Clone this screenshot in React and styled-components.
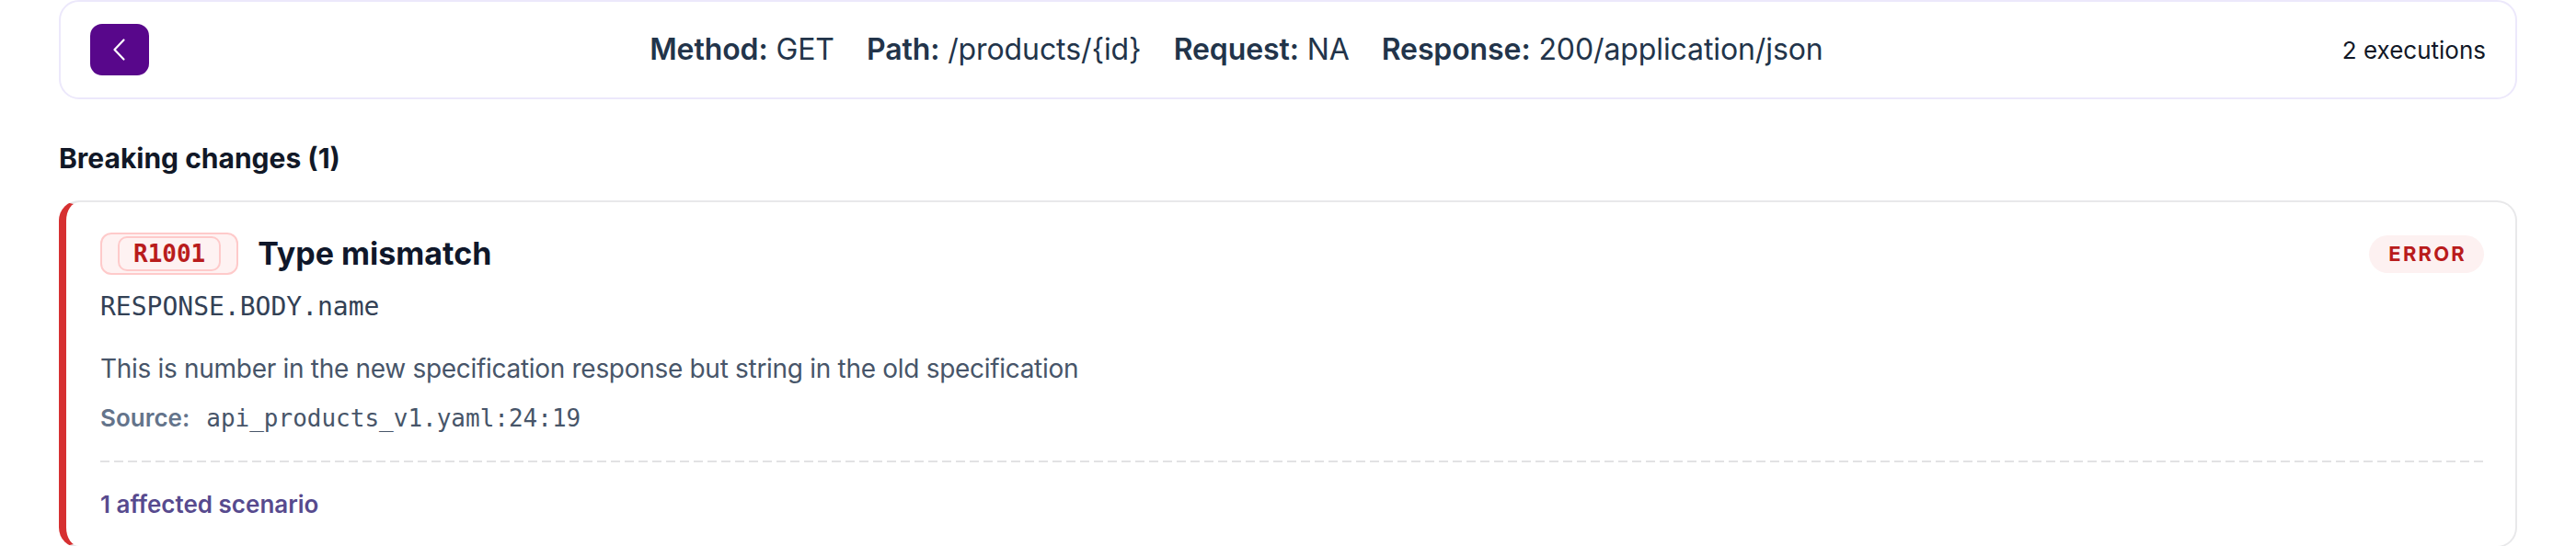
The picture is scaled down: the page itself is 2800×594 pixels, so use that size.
import React from 'react'
import styled, { createGlobalStyle } from 'styled-components'

const GlobalStyle = createGlobalStyle`
    body {
        margin: 0;
        background: #ffffff;
        font-family: Inter, "Noto Sans", "Liberation Sans", sans-serif;
    }
`

const meta = [
    { label: 'Method:', value: 'GET' },
    { label: 'Path:', value: '/products/{id}' },
    { label: 'Request:', value: 'NA' },
    { label: 'Response:', value: '200/application/json' },
]

function BackIcon() {
    return (
        <svg width="20" height="28" viewBox="0 0 20 28" fill="none">
            <path d="M14.5 3.5 L4.5 14 L14.5 24.5" stroke="#ffffff" strokeWidth="2.2"
                strokeLinecap="round" strokeLinejoin="round" />
        </svg>
    )
}

function App() {
    return (
        <Page>
            <GlobalStyle />
            <Header>
                <BackButton type="button" aria-label="Back">
                    <BackIcon />
                </BackButton>
                <MetaList>
                    {meta.map((m) => (
                        <MetaItem key={m.label}>
                            <strong>{m.label}</strong> {m.value}
                        </MetaItem>
                    ))}
                </MetaList>
                <Executions>2 executions</Executions>
            </Header>

            <SectionTitle>Breaking changes (1)</SectionTitle>

            <ChangeCard>
                <TitleRow>
                    <TitleGroup>
                        <RuleBadge>
                            <RuleCode>R1001</RuleCode>
                        </RuleBadge>
                        <ChangeTitle>Type mismatch</ChangeTitle>
                    </TitleGroup>
                    <Severity>ERROR</Severity>
                </TitleRow>
                <FieldPath>RESPONSE.BODY.name</FieldPath>
                <Description>
                    This is number in the new specification response but string in the old specification
                </Description>
                <SourceLine>
                    <SourceLabel>Source:</SourceLabel>
                    <SourceFile>api_products_v1.yaml:24:19</SourceFile>
                </SourceLine>
                <Divider />
                <Affected>1 affected scenario</Affected>
            </ChangeCard>
        </Page>
    )
}

export default App

const Page = styled.div`
    padding: 0 64px;
`

const Header = styled.header`
    display: flex;
    align-items: center;
    justify-content: space-between;
    padding: 24px 32px;
    border: 2px solid #ece8fb;
    border-radius: 22px;
    background: #ffffff;
`

const BackButton = styled.button`
    width: 64px;
    height: 56px;
    border: none;
    border-radius: 13px;
    background: #58078b;
    display: flex;
    align-items: center;
    justify-content: center;
    padding: 0;
    cursor: pointer;
`

const MetaList = styled.div`
    display: flex;
    align-items: center;
    gap: 35px;
    margin-right: 20px;
    font-size: 32px;
    line-height: 40px;
    letter-spacing: -0.1px;
    color: #22344a;
`

const MetaItem = styled.span`
    white-space: nowrap;

    strong {
        font-weight: 600;
    }
`

const Executions = styled.span`
    font-size: 26px;
    color: #111827;
`

const SectionTitle = styled.h2`
    margin: 43px 0 25px;
    font-size: 30px;
    line-height: 42px;
    font-weight: 700;
    color: #111827;
`

const ChangeCard = styled.section`
    border: 2px solid #e8e8ea;
    border-left: 8px solid #d63031;
    border-radius: 22px;
    padding: 33px 34px 26px 37px;
    background: #ffffff;
`

const TitleRow = styled.div`
    display: flex;
    align-items: center;
    justify-content: space-between;
`

const TitleGroup = styled.div`
    display: flex;
    align-items: center;
    gap: 21px;
`

const RuleBadge = styled.span`
    display: inline-flex;
    padding: 2px 17px;
    border: 2px solid #fecaca;
    border-radius: 12px;
    background: #fef2f2;
`

const RuleCode = styled.code`
    display: inline-block;
    padding: 0 15px;
    border: 2px solid #fecaca;
    border-radius: 10px;
    font-family: "DejaVu Sans Mono", "Liberation Mono", monospace;
    font-size: 26px;
    line-height: 34px;
    font-weight: 700;
    color: #b91c1c;
`

const ChangeTitle = styled.h3`
    margin: 0;
    font-size: 34px;
    line-height: 46px;
    font-weight: 700;
    color: #0f172a;
`

const Severity = styled.span`
    padding: 0 19px 0 21px;
    border-radius: 999px;
    background: #fdf1f1;
    font-size: 22px;
    line-height: 41px;
    font-weight: 700;
    letter-spacing: 2.2px;
    color: #b91c1c;
`

const FieldPath = styled.div`
    margin-top: 14px;
    font-family: "DejaVu Sans Mono", "Liberation Mono", monospace;
    font-size: 28px;
    line-height: 42px;
    color: #334155;
`

const Description = styled.p`
    margin: 25px 0 0;
    font-size: 28px;
    line-height: 42px;
    letter-spacing: -0.3px;
    color: #475569;
`

const SourceLine = styled.div`
    margin-top: 13px;
    display: flex;
    align-items: baseline;
    gap: 18px;
    font-size: 26px;
    line-height: 39px;
`

const SourceLabel = styled.span`
    font-weight: 600;
    color: #64748b;
`

const SourceFile = styled.code`
    font-family: "DejaVu Sans Mono", "Liberation Mono", monospace;
    font-size: 26px;
    color: #475569;
`

const Divider = styled.div`
    margin-top: 26px;
    height: 2px;
    background-image: linear-gradient(to right, #e2e2e4 66%, transparent 0);
    background-size: 15px 2px;
    background-repeat: repeat-x;
`

const Affected = styled.div`
    margin-top: 26px;
    font-size: 26px;
    line-height: 39px;
    font-weight: 600;
    color: #574a8e;
    cursor: pointer;
`
